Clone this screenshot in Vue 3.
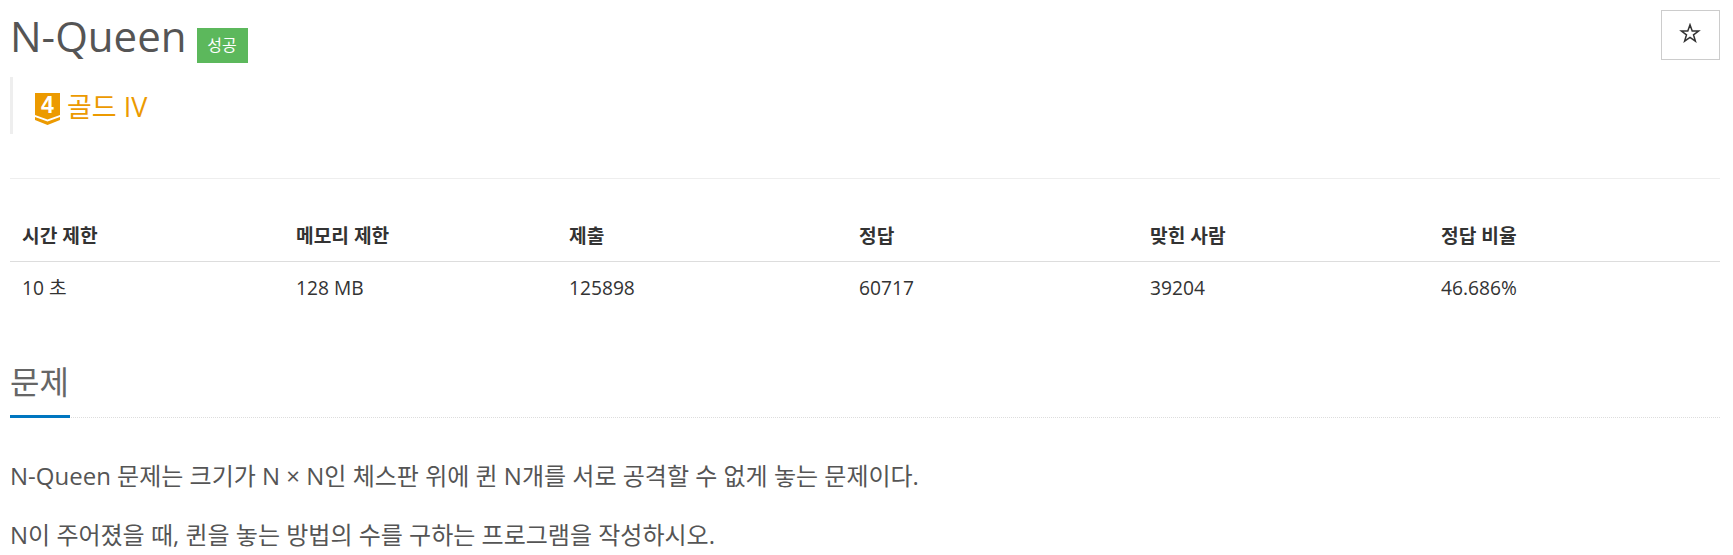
<script setup>
const columns = [
  { label: '시간 제한', value: '10 초' },
  { label: '메모리 제한', value: '128 MB' },
  { label: '제출', value: '125898' },
  { label: '정답', value: '60717' },
  { label: '맞힌 사람', value: '39204' },
  { label: '정답 비율', value: '46.686%' },
];
</script>

<template>
  <div class="page">
    <div class="header">
      <div>
        <div class="title-row">
          <h1 class="title">N-Queen</h1>
          <span class="label">성공</span>
        </div>
        <div class="tier">
          <svg class="tier-icon" viewBox="0 0 25 32" width="25" height="32">
            <path d="M0 0H25V22L12.5 26.5 0 22Z" fill="#ec9a00" />
            <path d="M0 24L12.5 28.5 25 24V27L12.5 32 0 27Z" fill="#ec9a00" />
            <text x="12.5" y="20" text-anchor="middle" class="tier-num">4</text>
          </svg>
          <span>골드 IV</span>
        </div>
      </div>
      <button class="star" type="button" aria-label="star">
        <svg viewBox="0 0 22 20" width="22" height="20">
          <path d="M11 1.8L13.2 8H19.6L14.5 11.8 16.4 18.2 11 14.4 5.6 18.2 7.5 11.8 2.4 8H8.8Z" fill="none" stroke="#333" stroke-width="1.5" />
        </svg>
      </button>
    </div>

    <hr class="divider" />

    <div class="info">
      <div v-for="col in columns" :key="col.label" class="info-head">{{ col.label }}</div>
      <div v-for="col in columns" :key="col.value" class="info-cell">{{ col.value }}</div>
    </div>

    <div class="section-head">
      <h2 class="section-title">문제</h2>
    </div>

    <div class="desc">
      <p>N-Queen 문제는 크기가 N × N인 체스판 위에 퀸 N개를 서로 공격할 수 없게 놓는 문제이다.</p>
      <p>N이 주어졌을 때, 퀸을 놓는 방법의 수를 구하는 프로그램을 작성하시오.</p>
    </div>
  </div>
</template>

<style>
html, body {
  margin: 0;
  background: #fff;
  overflow: hidden;
}
</style>

<style scoped>
.page {
  box-sizing: border-box;
  width: 1733px;
  height: 555px;
  overflow: hidden;
  padding: 0 13px 0 10px;
  font-family: "Open Sans", "Noto Sans CJK KR", sans-serif;
  color: #333;
}
.header {
  display: flex;
  justify-content: space-between;
  align-items: flex-start;
}
.title-row {
  display: flex;
  align-items: flex-start;
  gap: 10px;
  padding-top: 9px;
}
.title {
  margin: 0;
  font-size: 42px;
  line-height: 54px;
  font-weight: 400;
  color: #555;
}
.label {
  margin-top: 19px;
  width: 51px;
  height: 35px;
  line-height: 35px;
  text-align: center;
  background: #5cb85c;
  color: #fff;
  font-size: 16px;
}
.tier {
  display: flex;
  align-items: center;
  gap: 7px;
  height: 57px;
  margin-top: 14px;
  padding-left: 22px;
  border-left: 3px solid #eee;
  color: #ec9a00;
  font-size: 27px;
}
.tier-icon {
  margin-top: 6px;
}
.tier-num {
  font-family: "Liberation Sans", sans-serif;
  font-size: 23px;
  font-weight: 700;
  fill: #fff;
}
.star {
  display: flex;
  align-items: center;
  justify-content: center;
  box-sizing: border-box;
  margin-top: 10px;
  width: 59px;
  height: 50px;
  padding: 0 2px 5px 0;
  background: #fff;
  border: 1px solid #ccc;
}
.divider {
  margin: 44px 0 0;
  border: 0;
  border-top: 1px solid #eee;
}
.info {
  display: grid;
  grid-template-columns: 274px 273px 290px 291px 291px 1fr;
  margin-top: 30px;
  font-size: 19.2px;
}
.info-head {
  padding: 13px 12px 12px;
  line-height: 27px;
  font-weight: 700;
  border-bottom: 1px solid #ddd;
}
.info-cell {
  padding: 12px 12px 11px;
  line-height: 27px;
}
.section-head {
  margin-top: 48px;
  border-bottom: 1px dotted #ddd;
}
.section-title {
  display: inline-block;
  margin: 0 0 -1px;
  padding-bottom: 11px;
  width: 60px;
  font-size: 32px;
  line-height: 44px;
  font-weight: 400;
  color: #666;
  border-bottom: 3px solid #0076c0;
}
.desc {
  margin-top: 41px;
  font-size: 24px;
  line-height: 34px;
  color: #555;
}
.desc p {
  margin: 0 0 25px;
}
</style>
